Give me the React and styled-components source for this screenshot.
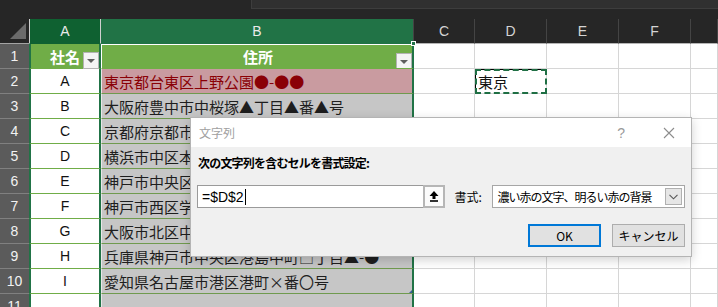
import React from 'react';
import styled, { createGlobalStyle } from 'styled-components';

const GlobalStyle = createGlobalStyle`
  html, body {
    margin: 0;
    padding: 0;
    background: #262626;
  }
  body {
    font-family: "Liberation Sans", "Noto Sans CJK JP", sans-serif;
  }
  * {
    box-sizing: border-box;
  }
`;

const Screen = styled.div`
  position: relative;
  width: 718px;
  height: 307px;
  overflow: hidden;
  background: #fff;
`;

const TopBar = styled.div`
  display: flex;
  height: 19px;
  background: #262626;
`;

const FormulaEdge = styled.div`
  flex: 1;
  height: 9px;
  margin-left: 251px;
  background: #303030;
  border-left: 1px solid #3d3d3d;
  border-bottom: 1px solid #3d3d3d;
`;

const Sheet = styled.div`
  display: grid;
  grid-template-columns: 29px 72px 313px 61px 72px 72px 72px 1fr;
  grid-template-rows: 25px;
  grid-auto-rows: 25px;
`;

const Corner = styled.div`
  position: relative;
  background: #262626;
  border-bottom: 1px solid #a3a3a3;

  &::after {
    content: '';
    position: absolute;
    right: 3px;
    bottom: 4px;
    border-left: 16px solid transparent;
    border-bottom: 16px solid #6b6b6b;
  }
`;

const headBg = { a: '#0f6131', b: '#217346', none: '#262626' };

const ColHead = styled.div`
  position: relative;
  display: flex;
  align-items: center;
  justify-content: center;
  background: ${({ $sel }) => headBg[$sel || 'none']};
  color: ${({ $sel }) => ($sel ? '#eaeaea' : '#d4d4d4')};
  font-size: 14px;
  border-right: 1px solid ${({ $sel }) => ($sel === 'a' ? '#cfcfcf' : '#444')};
  border-bottom: 1px solid ${({ $sel }) => ($sel ? 'transparent' : '#b5b5b5')};
  border-left: ${({ $sel }) => ($sel === 'a' ? '1px solid #cfcfcf' : '0')};
`;

const Handle = styled.span`
  position: absolute;
  right: -3px;
  bottom: -3px;
  width: 5px;
  height: 5px;
  background: #217346;
  border: 1px solid #fff;
  z-index: 2;
`;

const RowHead = styled.div`
  display: flex;
  align-items: center;
  justify-content: center;
  background: #5b5b5b;
  color: #f2f2f2;
  font-size: 14px;
  border-bottom: 1px solid #808080;
`;

const NameCell = styled.div`
  position: relative;
  display: flex;
  align-items: center;
  justify-content: center;
  background: ${({ $head }) => ($head ? '#70ad47' : '#fff')};
  color: ${({ $head }) => ($head ? '#fff' : '#111')};
  font-weight: ${({ $head }) => ($head ? 700 : 400)};
  font-size: ${({ $head }) => ($head ? '15px' : '14px')};
  border-left: 2px solid #217346;
  border-right: 2px solid #217346;
  border-bottom: 1px solid #70ad47;
`;

const addrBg = { head: '#70ad47', hit: '#c99ba0', plain: '#c6c6c6' };

const AddrCell = styled.div`
  position: relative;
  display: flex;
  align-items: center;
  justify-content: ${({ $kind }) => ($kind === 'head' ? 'center' : 'flex-start')};
  padding-left: 2px;
  background: ${({ $kind }) => addrBg[$kind]};
  color: ${({ $kind }) => ($kind === 'head' ? '#fff' : $kind === 'hit' ? '#8a0006' : '#1e1e1e')};
  font-family: "Noto Sans CJK JP", sans-serif;
  font-weight: ${({ $kind }) => ($kind === 'head' ? 700 : 400)};
  font-size: 15px;
  white-space: nowrap;
  overflow: hidden;
  border-left: 1px solid ${({ $kind }) => ($kind === 'head' ? '#fff' : '#e8e8e8')};
  border-top: ${({ $kind }) => ($kind === 'head' ? '1px solid #fff' : '0')};
  border-right: 2px solid #217346;
  border-bottom: 1px solid ${({ $kind }) => ($kind === 'head' ? '#70ad47' : '#6f9a4e')};
`;

const ResizeMark = styled.span`
  position: absolute;
  right: 0;
  bottom: 0;
  border-left: 3px solid transparent;
  border-bottom: 3px solid #3b5b9a;
`;

const FilterBtn = styled.span`
  position: absolute;
  right: 0;
  top: 8px;
  width: 16px;
  height: 17px;
  display: flex;
  align-items: center;
  justify-content: center;
  background: #f4f4f4;
  border: 1px solid #b3b3b3;

  &::after {
    content: '';
    border-left: 4px solid transparent;
    border-right: 4px solid transparent;
    border-top: 4px solid #5e5e5e;
  }
`;

const Cell = styled.div`
  position: relative;
  display: flex;
  align-items: center;
  padding-left: 3px;
  background: #fff;
  color: #111;
  font-family: "Noto Sans CJK JP", sans-serif;
  font-size: 15px;
  border-right: 1px solid #d6d6d6;
  border-bottom: 1px solid #d6d6d6;
`;

const CopyCell = styled(Cell)`
  box-shadow: inset 1px 1px 0 #000;

  &::after {
    content: '';
    position: absolute;
    inset: 0 -1px -1px 0;
    border: 2px dashed #1f6f44;
  }
`;

const Dialog = styled.div`
  position: absolute;
  left: 190px;
  top: 117px;
  width: 502px;
  height: 140px;
  display: flex;
  flex-direction: column;
  background: #f0f0f0;
  border: 1px solid #b4b4b4;
  box-shadow: 0 3px 10px rgba(0, 0, 0, 0.18);
  font-family: "Noto Sans CJK JP", "Liberation Sans", sans-serif;
  color: #000;
`;

const TitleBar = styled.div`
  height: 29px;
  display: flex;
  align-items: center;
  padding: 0 16px 0 8px;
  background: #fff;
`;

const Title = styled.span`
  flex: 1;
  font-size: 12px;
  color: #a0a0a0;
`;

const HelpMark = styled.span`
  margin-right: 38px;
  font-family: "Liberation Sans", sans-serif;
  font-size: 14px;
  color: #9a9a9a;
`;

const Body = styled.div`
  flex: 1;
  display: flex;
  flex-direction: column;
  padding: 8px 6px 0 6px;
`;

const Label = styled.div`
  height: 16px;
  line-height: 16px;
  font-size: 12px;
  font-weight: 700;
  letter-spacing: -0.8px;
  padding-left: 1px;
`;

const InputRow = styled.div`
  display: flex;
  align-items: center;
  margin-top: 14px;
  height: 23px;
`;

const RefInput = styled.div`
  width: 226px;
  height: 23px;
  display: flex;
  align-items: center;
  padding-left: 4px;
  background: #fff;
  border: 1px solid #9a9a9a;
  border-right: 0;
  font-family: "Liberation Sans", sans-serif;
  font-size: 14px;
`;

const Caret = styled.span`
  width: 1px;
  height: 16px;
  margin-left: 1px;
  background: #000;
`;

const CollapseBtn = styled.div`
  width: 22px;
  height: 23px;
  display: flex;
  align-items: center;
  justify-content: center;
  background: #fbfbfb;
  border: 2px solid #b6b6b6;
`;

const FormatLabel = styled.span`
  width: 48px;
  padding-left: 10px;
  font-size: 12px;
`;

const Select = styled.div`
  width: 193px;
  height: 23px;
  display: flex;
  align-items: center;
  background: #fff;
  border: 1px solid #a6a6a6;
`;

const SelectText = styled.span`
  flex: 1;
  padding-left: 4px;
  font-size: 12px;
  letter-spacing: -1px;
  white-space: nowrap;
`;

const DropBtn = styled.span`
  width: 17px;
  height: 17px;
  margin-right: 2px;
  display: flex;
  align-items: center;
  justify-content: center;
  background: #e6e6e6;
  border: 1px solid #b0b0b0;
`;

const ButtonRow = styled.div`
  display: flex;
  justify-content: flex-end;
  gap: 11px;
  margin-top: 16px;
`;

const Button = styled.button`
  width: 73px;
  height: 23px;
  padding: 0;
  background: #e1e1e1;
  border: ${({ $primary }) => ($primary ? '2px solid #0078d7' : '1px solid #adadad')};
  font-family: "Noto Sans CJK JP", "Liberation Sans", sans-serif;
  font-size: 12px;
  color: #000;
`;

const UpArrow = () => (
  <svg width="10" height="11" viewBox="0 0 10 11">
    <path d="M5 0 L9.5 5 L6.5 5 L6.5 8 L3.5 8 L3.5 5 L0.5 5 Z" fill="#000" />
    <rect x="1" y="9.2" width="8" height="1.6" fill="#000" />
  </svg>
);

const CloseIcon = () => (
  <svg width="12" height="12" viewBox="0 0 12 12">
    <path d="M1 1 L11 11 M11 1 L1 11" stroke="#8c8c8c" strokeWidth="1.1" />
  </svg>
);

const Chevron = () => (
  <svg width="9" height="6" viewBox="0 0 9 6">
    <path d="M0.5 0.8 L4.5 4.8 L8.5 0.8" stroke="#555" strokeWidth="1.1" fill="none" />
  </svg>
);

const rows = [
  { name: 'A', addr: '東京都台東区上野公園●-●●', hit: true },
  { name: 'B', addr: '大阪府豊中市中桜塚▲丁目▲番▲号' },
  { name: 'C', addr: '京都府京都市中京区●●町▲番地' },
  { name: 'D', addr: '横浜市中区本町▲丁目●番地' },
  { name: 'E', addr: '神戸市中央区三宮町▲丁目●-●' },
  { name: 'F', addr: '神戸市西区学園東町●丁目▲番' },
  { name: 'G', addr: '大阪市北区中之島▲丁目●-●' },
  { name: 'H', addr: '兵庫県神戸市中央区港島中町□丁目▲-●' },
  { name: 'I', addr: '愛知県名古屋市港区港町×番〇号' },
];

const extra = ['E', 'F', 'G'];

const App = () => {
  return (
    <Screen>
      <GlobalStyle />
      <TopBar>
        <FormulaEdge />
      </TopBar>
      <Sheet>
        <Corner />
        <ColHead $sel="a">A</ColHead>
        <ColHead $sel="b">B<Handle /></ColHead>
        <ColHead>C</ColHead>
        <ColHead>D</ColHead>
        {extra.map((c) => (
          <ColHead key={c}>{c === 'G' ? '' : c}</ColHead>
        ))}

        <RowHead>1</RowHead>
        <NameCell $head>社名<FilterBtn /></NameCell>
        <AddrCell $kind="head">住所<FilterBtn /></AddrCell>
        <Cell />
        <Cell />
        <Cell />
        <Cell />
        <Cell />

        {rows.map((r, i) => (
          <React.Fragment key={r.name}>
            <RowHead>{i + 2}</RowHead>
            <NameCell>{r.name}</NameCell>
            <AddrCell $kind={r.hit ? 'hit' : 'plain'}>
              {r.addr}
              {i === rows.length - 1 && <ResizeMark />}
            </AddrCell>
            <Cell />
            {i === 0 ? <CopyCell>東京</CopyCell> : <Cell />}
            <Cell />
            <Cell />
            <Cell />
          </React.Fragment>
        ))}

        <RowHead>11</RowHead>
        <NameCell />
        <AddrCell $kind="plain" />
        <Cell />
        <Cell />
        <Cell />
        <Cell />
        <Cell />
      </Sheet>

      <Dialog>
        <TitleBar>
          <Title>文字列</Title>
          <HelpMark>?</HelpMark>
          <CloseIcon />
        </TitleBar>
        <Body>
          <Label>次の文字列を含むセルを書式設定:</Label>
          <InputRow>
            <RefInput>
              =$D$2<Caret />
            </RefInput>
            <CollapseBtn>
              <UpArrow />
            </CollapseBtn>
            <FormatLabel>書式:</FormatLabel>
            <Select>
              <SelectText>濃い赤の文字、明るい赤の背景</SelectText>
              <DropBtn>
                <Chevron />
              </DropBtn>
            </Select>
          </InputRow>
          <ButtonRow>
            <Button $primary>OK</Button>
            <Button>キャンセル</Button>
          </ButtonRow>
        </Body>
      </Dialog>
    </Screen>
  );
};

export default App;
